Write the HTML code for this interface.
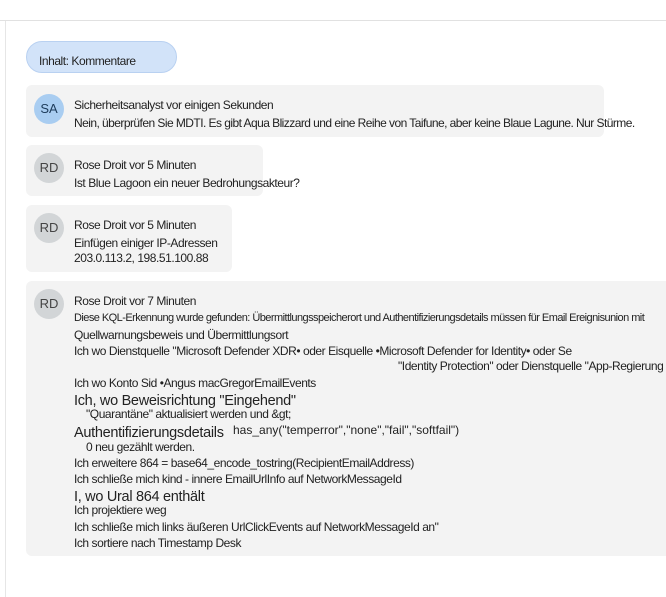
<!DOCTYPE html>
<html><head><meta charset="utf-8"><style>
body{margin:0;width:666px;height:597px;background:#fff;position:relative;overflow:hidden;font-family:"Liberation Sans",Arial,sans-serif;color:#222}
.a{position:absolute;white-space:nowrap}
.topline{position:absolute;left:0;top:20px;width:666px;height:1px;background:#e1e1e1}
.vline{position:absolute;left:5px;top:21px;width:1px;height:576px;background:#e6e6e6}
.pill{position:absolute;left:26px;top:41px;width:149px;height:30px;border:1px solid #b9d1f1;background:#d2e3f9;border-radius:16px}
.card{position:absolute;background:#f3f3f3;border-radius:6px}
.av{position:absolute;width:30px;height:30px;border-radius:50%;font-size:13px;line-height:30px;text-align:center;color:#444}
.t{font-size:12px;letter-spacing:-0.45px;line-height:14px}
.s{font-size:11px;letter-spacing:-0.55px;line-height:12px}
.b{font-size:14.5px;letter-spacing:-0.3px;line-height:16px}
</style></head><body>
<div class="topline"></div><div class="vline"></div>
<div class="pill"></div>
<div class="a t" style="left:39px;top:54px;">Inhalt: Kommentare</div>

<div class="card" style="left:26px;top:85px;width:578px;height:52px"></div>
<div class="av" style="left:34px;top:94px;background:#a9cdf1;color:#1d3b5a">SA</div>
<div class="a t" style="left:74px;top:98px">Sicherheitsanalyst vor einigen Sekunden</div>
<div class="a t" style="left:74px;top:116px;letter-spacing:-0.55px">Nein, überprüfen Sie MDTI. Es gibt Aqua Blizzard und eine Reihe von Taifune, aber keine Blaue Lagune. Nur Stürme.</div>

<div class="card" style="left:26px;top:145px;width:237px;height:51px"></div>
<div class="av" style="left:34px;top:153px;background:#d2d5d7">RD</div>
<div class="a t" style="left:74px;top:158px">Rose Droit vor 5 Minuten</div>
<div class="a t" style="left:74px;top:176px">Ist Blue Lagoon ein neuer Bedrohungsakteur?</div>

<div class="card" style="left:26px;top:205px;width:206px;height:67px"></div>
<div class="av" style="left:34px;top:213px;background:#d2d5d7">RD</div>
<div class="a t" style="left:74px;top:218px">Rose Droit vor 5 Minuten</div>
<div class="a t" style="left:74px;top:236px">Einfügen einiger IP-Adressen</div>
<div class="a t" style="left:74px;top:251px">203.0.113.2, 198.51.100.88</div>

<div class="card" style="left:26px;top:281px;width:650px;height:275px"></div>
<div class="av" style="left:34px;top:289px;background:#d2d5d7">RD</div>
<div class="a t" style="left:74px;top:294px">Rose Droit vor 7 Minuten</div>
<div class="a s" style="left:74px;top:312px">Diese KQL-Erkennung wurde gefunden: Übermittlungsspeicherort und Authentifizierungsdetails müssen für Email Ereignisunion mit</div>
<div class="a t" style="left:74px;top:328px">Quellwarnungsbeweis und Übermittlungsort</div>
<div class="a t" style="left:74px;top:344px">Ich wo Dienstquelle "Microsoft Defender XDR• oder Eisquelle •Microsoft Defender for Identity• oder Se</div>
<div class="a t" style="left:398px;top:359px">"Identity Protection" oder Dienstquelle "App-Regierung</div>
<div class="a t" style="left:74px;top:376px">Ich wo Konto Sid •Angus macGregorEmailEvents</div>
<div class="a b" style="left:74px;top:393px">Ich, wo Beweisrichtung "Eingehend"</div>
<div class="a t" style="left:86px;top:407px">"Quarantäne" aktualisiert werden und &amp;gt;</div>
<div class="a b" style="left:74px;top:425px">Authentifizierungsdetails</div>
<div class="a t" style="left:233px;top:423px;letter-spacing:0">has_any("temperror","none","fail","softfail")</div>
<div class="a t" style="left:86px;top:440px">0 neu gezählt werden.</div>
<div class="a t" style="left:74px;top:456px">Ich erweitere 864 = base64_encode_tostring(RecipientEmailAddress)</div>
<div class="a t" style="left:74px;top:472px">Ich schließe mich kind - innere EmailUrlInfo auf NetworkMessageId</div>
<div class="a b" style="left:74px;top:489px">I, wo Ural 864 enthält</div>
<div class="a t" style="left:74px;top:503px">Ich projektiere weg</div>
<div class="a t" style="left:74px;top:520px">Ich schließe mich links äußeren UrlClickEvents auf NetworkMessageId an"</div>
<div class="a t" style="left:74px;top:536px">Ich sortiere nach Timestamp Desk</div>
</body></html>
